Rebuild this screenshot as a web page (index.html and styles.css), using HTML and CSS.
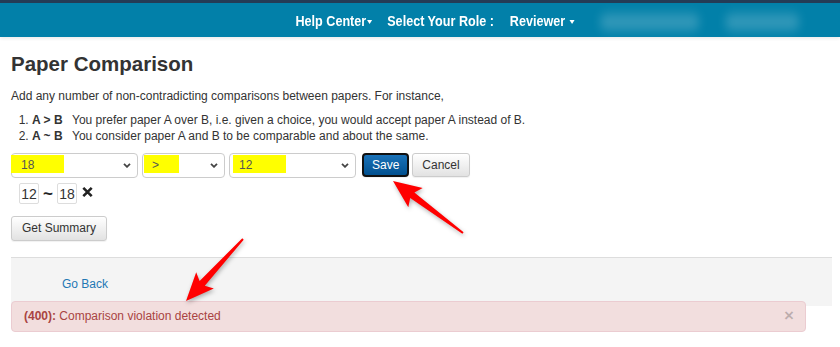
FILE: index.html
```html
<!DOCTYPE html>
<html lang="en">
<head>
  <meta charset="UTF-8">
  <meta name="viewport" content="width=device-width, initial-scale=1.0">
  <title>Paper Comparison</title>
  <link rel="stylesheet" href="styles.css">
</head>
<body>
  <div class="topbar"></div>
  <nav class="navbar">
    <ul class="nav-menu">
      <li class="nav-item">Help Center<span class="caret"></span></li>
      <li class="nav-item role-label">Select Your Role :</li>
      <li class="nav-item role-value">Reviewer <span class="caret"></span></li>
      <li class="nav-blur blur-wide"></li>
      <li class="nav-blur"></li>
    </ul>
  </nav>

  <div class="container">
    <h1>Paper Comparison</h1>
    <p class="intro">Add any number of non-contradicting comparisons between papers. For instance,</p>
    <ol class="rules">
      <li><span class="op">A &gt; B</span>You prefer paper A over B, i.e. given a choice, you would accept paper A instead of B.</li>
      <li><span class="op">A ~ B</span>You consider paper A and B to be comparable and about the same.</li>
    </ol>

    <form class="compare-row" id="compareForm">
      <div class="select select-paper">
        <span class="hl hl-first"></span>
        <span class="select-value">18</span>
        <svg class="chevron" width="8" height="5" viewBox="0 0 8 5"><polyline points="1,0.8 4,3.8 7,0.8" fill="none" stroke="#444" stroke-width="1.8"/></svg>
      </div>
      <div class="select select-op">
        <span class="hl hl-op"></span>
        <span class="select-value">&gt;</span>
        <svg class="chevron" width="8" height="5" viewBox="0 0 8 5"><polyline points="1,0.8 4,3.8 7,0.8" fill="none" stroke="#444" stroke-width="1.8"/></svg>
      </div>
      <div class="select select-paper">
        <span class="hl hl-last"></span>
        <span class="select-value">12</span>
        <svg class="chevron" width="8" height="5" viewBox="0 0 8 5"><polyline points="1,0.8 4,3.8 7,0.8" fill="none" stroke="#444" stroke-width="1.8"/></svg>
      </div>
      <button type="submit" class="btn btn-primary">Save</button>
      <button type="button" class="btn">Cancel</button>
    </form>

    <div class="pairs">
      <span class="chip">12</span>
      <span class="sim">~</span>
      <span class="chip">18</span>
      <svg class="remove" width="11" height="10" viewBox="0 0 11 10"><path d="M1.3 0.9 L9.7 9.1 M9.7 0.9 L1.3 9.1" stroke="#222" stroke-width="2.6"/></svg>
    </div>

    <button type="button" class="btn summary">Get Summary</button>
  </div>

  <section class="back-panel">
    <a href="#" class="back-link">Go Back</a>
  </section>

  <div class="alert">
    <span><b>(400):</b> Comparison violation detected</span>
    <span class="alert-close">&times;</span>
  </div>

  <!-- red arrows drawn on the screenshot -->
  <svg class="annotations" width="840" height="347" viewBox="0 0 840 347">
    <polygon points="393,181 422.7,188.1 414.4,192.5 463.6,232.2 462.4,233.8 410.2,198.1 408.3,207.3" />
    <polygon points="186,301 213.8,288.5 204.8,285.7 243.7,239.7 242.3,238.3 199.6,280.9 196.2,272.3" />
  </svg>
</body>
</html>
```

FILE: styles.css
```css
body {
  font-family: "Liberation Sans", Arial, sans-serif;
  font-size: 12px;
  color: #333;
  background-color: #fff;
  margin: 0;
  padding: 0;
  overflow: hidden;
}
.topbar {
  height: 3px;
  background-color: #243c56;
}
.navbar {
  height: 34px;
  background-color: #0280a9;
  box-shadow: 0 2px 3px rgba(0, 0, 0, 0.07);
}
/* the menu font is a condensed face, squeeze the row to get it */
.nav-menu {
  display: flex;
  justify-content: flex-end;
  align-items: center;
  height: 100%;
  margin: 0;
  padding: 0 48px 0 0;
  list-style: none;
  transform: scaleX(0.84);
  transform-origin: right center;
}
.nav-item {
  font-weight: bold;
  font-size: 15px;
  color: #fff;
  margin-left: 18px;
  white-space: nowrap;
}
.role-value {
  margin-left: 19px;
}
.caret {
  display: inline-block;
  width: 0;
  height: 0;
  margin-left: 1px;
  vertical-align: middle;
  border-top: 4px solid #fff;
  border-left: 3.5px solid transparent;
  border-right: 3.5px solid transparent;
}
.nav-blur {
  width: 89px;
  height: 16px;
  margin-left: 30px;
  margin-top: 3px;
  border-radius: 8px;
  background-color: rgba(255, 255, 255, 0.2);
  filter: blur(6px);
}
.blur-wide {
  width: 119px;
}
.container {
  padding: 0 11px;
}
h1 {
  font-size: 20.5px;
  line-height: 22.5px;
  font-weight: bold;
  margin: 16px 0 0;
}
.intro {
  line-height: 16px;
  margin: 12px 0 0;
}
.rules {
  line-height: 16px;
  margin: 8px 0 0;
  padding-left: 21px;
}
.op {
  display: inline-block;
  width: 40px;
  font-weight: bold;
}
.compare-row {
  display: flex;
  align-items: center;
  margin-top: 9px;
}
.select {
  position: relative;
  display: flex;
  align-items: center;
  justify-content: space-between;
  box-sizing: border-box;
  height: 25px;
  padding: 0 6px 0 9px;
  margin-right: 4px;
  border: 1px solid #ccc;
  border-radius: 4px;
  color: #555;
}
.select-paper {
  width: 127px;
}
.select-op {
  width: 83px;
}
.select-value {
  position: relative;
}
.hl {
  position: absolute;
  top: 1px;
  height: 18px;
  background-color: #ffff00;
}
.hl-first {
  left: -1px;
  width: 53px;
}
.hl-op {
  left: 1px;
  width: 35px;
}
.hl-last {
  left: 3px;
  width: 53px;
}
.chevron {
  position: relative;
}
.btn {
  font-family: inherit;
  font-size: 12px;
  height: 24px;
  padding: 0 9px;
  margin-right: 4px;
  color: #333;
  border: 1px solid #ccc;
  border-radius: 3px;
  background: linear-gradient(#fff, #e2e2e2);
  box-shadow: 0 1px 1px rgba(0, 0, 0, 0.06);
  cursor: pointer;
}
.btn-primary {
  padding: 0 8px;
  margin-left: 2px;
  margin-right: 3px;
  color: #fff;
  border: 2px solid #111;
  border-radius: 4px;
  background: linear-gradient(#1a72b8, #01508f);
}
.pairs {
  display: flex;
  align-items: center;
  gap: 3px;
  margin: 5px 0 0 8px;
}
.chip {
  box-sizing: border-box;
  height: 21px;
  width: 20px;
  padding-top: 2px;
  font-size: 14px;
  text-align: center;
  border: 1px solid #ddd;
  border-radius: 2px;
}
.sim {
  font-size: 17px;
  font-weight: bold;
  color: #222;
  margin: 0 1px;
  line-height: 1;
}
.remove {
  margin-left: 2px;
  margin-top: -3px;
}
.summary {
  height: 25px;
  padding: 0 10px;
  margin-top: 12px;
}
.back-panel {
  height: 49px;
  margin: 16px 8px 0 11px;
  padding: 18px 0 0 51px;
  box-sizing: border-box;
  background-color: #f4f4f4;
  border-top: 1px solid #ddd;
}
.back-link {
  line-height: 16px;
  color: #1f78b4;
  text-decoration: none;
}
.alert {
  position: relative;
  display: flex;
  justify-content: space-between;
  align-items: center;
  height: 31px;
  box-sizing: border-box;
  margin: -5px 34px 0 11px;
  padding: 0 11px 0 12px;
  line-height: 16px;
  color: #a94442;
  background-color: #f2dede;
  border: 1px solid #ebccd1;
  border-radius: 4px;
}
.alert-close {
  font-size: 17px;
  font-weight: bold;
  color: rgba(0, 0, 0, 0.22);
}
.annotations {
  position: absolute;
  top: 0;
  left: 0;
  pointer-events: none;
  fill: #ff0000;
  filter: drop-shadow(1px 2px 2px rgba(0, 0, 0, 0.3));
}
```
